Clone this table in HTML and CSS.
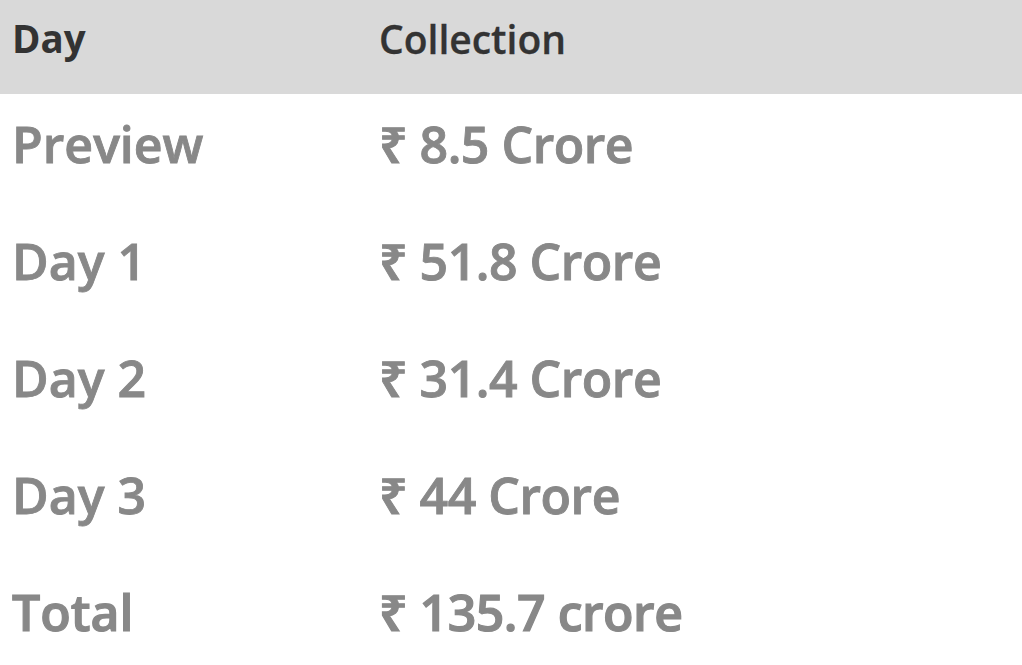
FILE: index.html
```html
<!DOCTYPE html>
<html>
<head>
<meta charset="utf-8">
<link rel="stylesheet" href="styles.css">
</head>
<body>
<table class="coll">
  <thead>
    <tr class="head"><th class="c1">Day</th><th class="c2">Collection</th></tr>
  </thead>
  <tbody>
    <tr><td class="c1">Preview</td><td class="c2">₹ 8.5 Crore</td></tr>
    <tr><td class="c1">Day 1</td><td class="c2">₹ 51.8 Crore</td></tr>
    <tr><td class="c1">Day 2</td><td class="c2">₹ 31.4 Crore</td></tr>
    <tr><td class="c1">Day 3</td><td class="c2">₹ 44 Crore</td></tr>
    <tr class="total"><td class="c1">Total</td><td class="c2">₹ 135.7 crore</td></tr>
  </tbody>
</table>
</body>
</html>
```
FILE: styles.css
```css
html, body { margin: 0; padding: 0; background: #fff; }
body { font-family: "Open Sans", "Noto Sans", sans-serif; overflow: hidden; }
.coll { width: 100%; border-collapse: collapse; table-layout: fixed; }
.coll th, .coll td { text-align: left; vertical-align: top; padding: 0; white-space: nowrap; }
.head { background: #d9d9d9; }
.head th { height: 94px; box-sizing: border-box; padding-top: 12px; font-size: 39px; font-weight: 600; color: #333; -webkit-text-stroke: 0.3px #333; }
.head th.c1 { font-weight: 700; font-size: 38.5px; -webkit-text-stroke: 0; }
.c1 { width: 379px; box-sizing: border-box; padding-left: 12px !important; }
.coll td { height: 117px; box-sizing: border-box; padding-top: 16px; font-size: 50px; font-weight: 600; color: #888; -webkit-text-stroke: 0.9px #888; }
.coll td.c2 { letter-spacing: -0.5px; }
.total td { -webkit-text-stroke: 1.2px #888; }
```
